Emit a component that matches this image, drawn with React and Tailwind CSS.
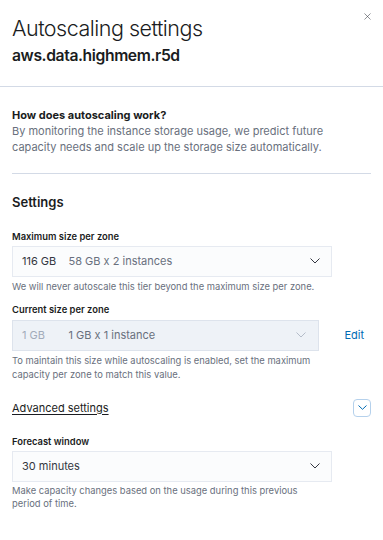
import { X } from 'lucide-react';

function Chevron({ className }) {
  return (
    <svg width="10" height="6" viewBox="0 0 10 6" className={className} fill="none">
      <path d="M0.5 0.5 L5 5 L9.5 0.5" stroke="currentColor" strokeWidth="1" />
    </svg>
  );
}

function Select({ left, right, disabled, className }) {
  return (
    <div
      className={
        'h-[31px] flex items-center pl-[9px] border ' +
        (disabled
          ? 'bg-[#eef2f7] border-[#dde3ec] pr-[12px] '
          : 'bg-[#fbfcfd] border-[#e6eaf1] pr-[11px] ') +
        className
      }
    >
      {left && (
        <span className={'w-[46.5px] ' + (disabled ? 'text-[#a2abba]' : 'text-[#343741]')}>{left}</span>
      )}
      <span className={'flex-1 ' + (disabled ? 'text-[#69707d]' : left ? 'text-[#69707d]' : 'text-[#343741]')}>{right}</span>
      <Chevron className={disabled ? 'text-[#b4bcc9]' : 'text-[#343741]'} />
    </div>
  );
}

export default function App() {
  return (
    <div className="relative w-[383px] h-[540px] bg-white overflow-hidden text-[#343741]" style={{ fontFamily: 'Inter, "Noto Sans", sans-serif' }}>
      <button className="absolute top-[11px] right-[10px] text-[#343741]">
        <X size={11} strokeWidth={1.2} />
      </button>

      <header className="px-3 pt-[13.5px] pb-[19.5px] border-b border-[#d3dae6]">
        <h1 className="text-[21.5px] leading-[28px] font-light tracking-[-0.5px] text-[#1a1c21]">Autoscaling settings</h1>
        <h2 className="mt-[4.5px] text-[15.7px] leading-[20px] font-semibold tracking-[-0.4px] text-[#1a1c21]">aws.data.highmem.r5d</h2>
      </header>

      <main className="px-3 pt-[20px]">
        <h3 className="text-[11px] leading-[16px] font-bold text-[#1a1c21]">How does autoscaling work?</h3>
        <p className="mt-[1.5px] max-w-[340px] text-[11px] leading-[15.7px] text-[#69707d]">
          By monitoring the instance storage usage, we predict future capacity needs and scale up the storage size automatically.
        </p>

        <div className="mt-[17.6px] h-px bg-[#d3dae6]" />

        <h3 className="mt-[20px] text-[13px] leading-[16px] font-semibold text-[#1a1c21]">Settings</h3>

        <div className="mt-[21.1px] w-[320px]">
          <label className="block text-[9.4px] leading-[12px] font-semibold text-[#1a1c21]">Maximum size per zone</label>
          <Select className="mt-[2.9px] text-[11px]" left="116 GB" right="58 GB x 2 instances" />
          <p className="mt-[2.8px] w-[318px] text-[9.4px] leading-[14px] text-[#69707d]">
            We will never autoscale this tier beyond the maximum size per zone.
          </p>
        </div>

        <div className="mt-[10.6px]">
          <label className="block text-[9.4px] leading-[12px] font-semibold text-[#1a1c21]">Current size per zone</label>
          <div className="mt-[3.3px] flex items-center justify-between">
            <Select disabled className="w-[307px] text-[11px]" left="1 GB" right="1 GB x 1 instance" />
            <a className="mr-[7px] text-[11px] text-[#006bb4]">Edit</a>
          </div>
          <p className="mt-[3.5px] w-[318px] text-[9.4px] leading-[13.7px] text-[#69707d]">
            To maintain this size while autoscaling is enabled, set the maximum capacity per zone to match this value.
          </p>
        </div>

        <div className="mt-[17px] h-[18px] flex items-center justify-between">
          <span className="text-[11px] leading-[16px] underline underline-offset-2 text-[#1a1c21]">Advanced settings</span>
          <span className="w-[18px] h-[18px] rounded-[4px] border-[1.5px] border-[#b5d1ec] flex items-center justify-center text-[#006bb4]">
            <svg width="9" height="5" viewBox="0 0 9 5" fill="none">
              <path d="M0.5 0.5 L4.5 4.3 L8.5 0.5" stroke="currentColor" strokeWidth="1" />
            </svg>
          </span>
        </div>

        <div className="mt-[19.4px] w-[320px]">
          <label className="block text-[9.4px] leading-[12px] font-semibold text-[#1a1c21]">Forecast window</label>
          <Select className="mt-[2.6px] text-[11px]" right="30 minutes" />
          <p className="mt-[2.5px] w-[304px] text-[9.4px] leading-[13.4px] text-[#69707d]">
            Make capacity changes based on the usage during this previous period of time.
          </p>
        </div>
      </main>
    </div>
  );
}
